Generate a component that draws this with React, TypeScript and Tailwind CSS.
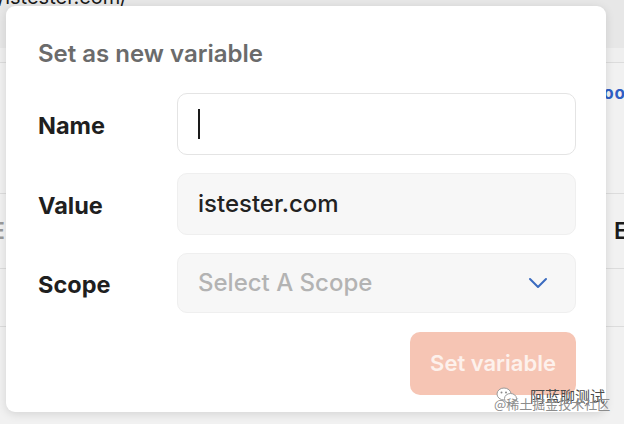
import React from "react";

function Chevron() {
  return (
    <svg width="20" height="12" viewBox="0 0 20 12" fill="none">
      <path d="M2 2l8 8 8-8" stroke="#3a6bbf" strokeWidth="2" strokeLinecap="round" strokeLinejoin="round" />
    </svg>
  );
}

function WeChat() {
  return (
    <svg width="22" height="18" viewBox="0 0 22 18" fill="none">
      <ellipse cx="8" cy="7" rx="7" ry="6" fill="#ffffff" stroke="#9a9a9a" strokeWidth="1" />
      <ellipse cx="14.5" cy="11.5" rx="6" ry="5" fill="#ffffff" stroke="#9a9a9a" strokeWidth="1" />
      <circle cx="5.5" cy="5.5" r="1" fill="#8a8a8a" />
      <circle cx="10" cy="5.5" r="1" fill="#8a8a8a" />
    </svg>
  );
}

export default function App() {
  return (
    <div
      className="relative h-[424px] w-[624px] overflow-hidden bg-[#f1f1f1]"
      style={{ fontFamily: "Inter, 'Noto Sans', sans-serif" }}
    >
      {/* page behind the dialog */}
      <div className="flex h-[48px] flex-col bg-[#e7e7e7]">
        <div className="-ml-[2px] -mt-[18px] text-[20px] leading-[30px] text-[#1a1a1a]">/istester.com/</div>
      </div>
      <div className="h-[15px] border-b border-[#dcdcdc] bg-[#efefef]" />
      <div className="flex h-[131px] justify-end border-b border-[#dcdcdc] pt-[20px]">
        <span className="-mr-[2px] text-[17px] font-bold leading-[20px] tracking-[1px] text-[#2f5fc4]">oo</span>
      </div>
      <div className="flex h-[75px] items-center justify-between border-b border-[#dcdcdc]">
        <span className="-ml-[9px] text-[23px] font-semibold text-[#9a9a9a]">E</span>
        <span className="-mr-[4px] text-[23px] font-semibold text-[#1a1a1a]">E</span>
      </div>
      <div className="h-[58px] border-b border-[#dcdcdc]" />

      {/* dialog */}
      <div className="absolute left-[6px] top-[6px] flex h-[406px] w-[600px] flex-col rounded-[9px] bg-white pl-[32px] pr-[30px] pt-[32px] shadow-[0_2px_10px_rgba(0,0,0,0.12)]">
        <div className="text-[24px] font-semibold leading-[32px] text-[#6b6b6b]">Set as new variable</div>

        <div className="mt-[23px] flex flex-col gap-[18px]">
          <div className="flex items-center">
            <div className="w-[139px] pt-[3px] text-[23.5px] font-bold text-[#1f1f1f]">Name</div>
            <div className="flex h-[62px] flex-1 items-center rounded-[10px] border-[1.5px] border-[#e4e4e4] bg-white pl-[20px]">
              <div className="h-[30px] w-[2px] bg-[#1a1a1a]" />
            </div>
          </div>
          <div className="flex items-center">
            <div className="w-[139px] pt-[3px] text-[23.5px] font-bold text-[#1f1f1f]">Value</div>
            <div className="flex h-[62px] flex-1 items-center rounded-[10px] border-[1.5px] border-[#efefef] bg-[#f7f7f7] pl-[20px] text-[24px] font-medium text-[#222222]">
              istester.com
            </div>
          </div>
          <div className="flex items-center">
            <div className="w-[139px] pt-[3px] text-[23.5px] font-bold text-[#1f1f1f]">Scope</div>
            <div className="flex h-[60px] flex-1 items-center justify-between rounded-[10px] border-[1.5px] border-[#efefef] bg-[#f7f7f7] pl-[20px] pr-[27px] text-[24px] font-medium text-[#b3b3b3]">
              <span>Select A Scope</span>
              <Chevron />
            </div>
          </div>
        </div>

        <div className="mt-[19px] flex justify-end">
          <div className="flex h-[63px] w-[166px] items-center justify-center rounded-[10px] bg-[#f6c5b4] text-[22px] font-semibold text-[#fdf1ec]">
            Set variable
          </div>
        </div>
      </div>

      {/* watermark */}
      <div className="absolute left-[496px] top-[387px] flex items-center gap-[12px] whitespace-nowrap">
        <WeChat />
        <span
          className="text-[15px] leading-[18px] text-[#4a4a4a]"
          style={{ fontFamily: "'Noto Sans CJK SC', sans-serif" }}
        >
          阿蓝聊测试
        </span>
      </div>
      <div
        className="absolute left-[494px] top-[396px] whitespace-nowrap text-[13px] leading-[16px] text-[#8c8c8c]"
        style={{ fontFamily: "'Noto Sans CJK SC', sans-serif" }}
      >
        @稀土掘金技术社区
      </div>
    </div>
  );
}
